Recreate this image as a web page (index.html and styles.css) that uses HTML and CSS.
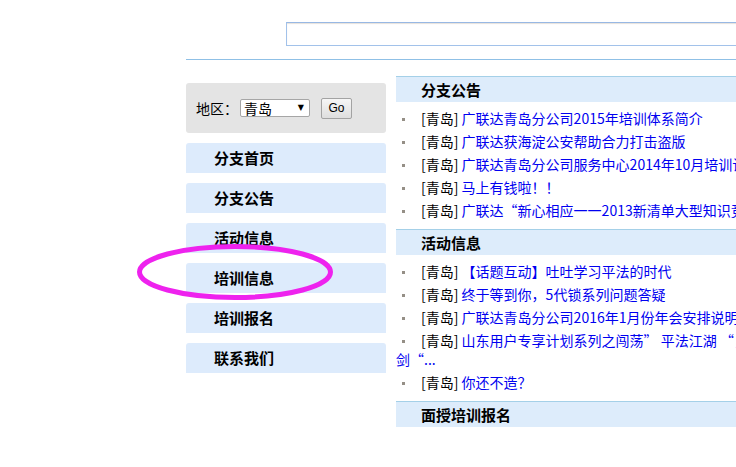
FILE: index.html
```html
<!DOCTYPE html>
<html lang="zh-CN">
<head>
<meta charset="utf-8">
<title>分支公告</title>
<link rel="stylesheet" href="styles.css">
</head>
<body>
<header class="top">
  <div class="search-row"><input class="search" type="text"></div>
  <div class="rule"></div>
</header>
<div class="main">
  <aside class="side">
    <div class="region">
      <span class="region-label">地区：</span>
      <span class="select"><span class="select-text">青岛</span><span class="select-arrow">▼</span></span>
      <button class="go" type="button">Go</button>
    </div>
    <nav class="nav">
      <a class="nav-item">分支首页</a>
      <a class="nav-item">分支公告</a>
      <a class="nav-item">活动信息</a>
      <a class="nav-item">培训信息</a>
      <a class="nav-item">培训报名</a>
      <a class="nav-item">联系我们</a>
    </nav>
  </aside>
  <section class="content">
    <div class="block">
      <h2 class="block-title">分支公告</h2>
      <ul class="list">
        <li><span class="dot"></span><span class="tag">[青岛]</span> <a class="link">广联达青岛分公司2015年培训体系简介</a></li>
        <li><span class="dot"></span><span class="tag">[青岛]</span> <a class="link">广联达获海淀公安帮助合力打击盗版</a></li>
        <li><span class="dot"></span><span class="tag">[青岛]</span> <a class="link">广联达青岛分公司服务中心2014年10月培训计</a></li>
        <li><span class="dot"></span><span class="tag">[青岛]</span> <a class="link">马上有钱啦！！</a></li>
        <li><span class="dot"></span><span class="tag">[青岛]</span> <a class="link">广联达“新心相应一一2013新清单大型知识竞</a></li>
      </ul>
    </div>
    <div class="block">
      <h2 class="block-title">活动信息</h2>
      <ul class="list">
        <li><span class="dot"></span><span class="tag">[青岛]</span> <a class="link">【话题互动】吐吐学习平法的时代</a></li>
        <li><span class="dot"></span><span class="tag">[青岛]</span> <a class="link">终于等到你，5代锁系列问题答疑</a></li>
        <li><span class="dot"></span><span class="tag">[青岛]</span> <a class="link">广联达青岛分公司2016年1月份年会安排说明</a></li>
        <li><span class="dot"></span><span class="tag">[青岛]</span> <a class="link">山东用户专享计划系列之闯荡” 平法江湖 “，剑“...</a></li>
        <li><span class="dot"></span><span class="tag">[青岛]</span> <a class="link">你还不造？</a></li>
      </ul>
    </div>
    <div class="block">
      <h2 class="block-title">面授培训报名</h2>
    </div>
  </section>
</div>
<svg class="annot" width="204" height="64" viewBox="0 0 204 64" aria-hidden="true">
  <ellipse cx="101" cy="31" rx="95.5" ry="25.5" fill="none" stroke="#ee22ee" stroke-width="5"/>
</svg>
</body>
</html>
```

FILE: styles.css
```css
html, body {
  margin: 0;
  padding: 0;
  overflow: hidden;
  background: #ffffff;
}
body {
  font-family: "Noto Sans CJK SC", "Liberation Sans", sans-serif;
  font-size: 14px;
  color: #000;
  position: relative;
  width: 736px;
  height: 467px;
}
.top {
  padding: 22px 0 0 186px;
}
.search-row {
  padding-left: 100px;
  height: 24px;
}
.search {
  display: block;
  box-sizing: border-box;
  width: 480px;
  height: 24px;
  margin: 0;
  border: 1px solid #a2c2ea;
  border-top-color: #98b8e4;
  box-shadow: inset 0 1px 1px #e6e2dc;
  background: #fff;
  outline: none;
}
.rule {
  margin-top: 13px;
  width: 600px;
  height: 1px;
  background: #8fc0e6;
}
.main {
  display: flex;
  gap: 10px;
  padding-left: 186px;
}
.side {
  flex: none;
  width: 200px;
  margin-top: 23px;
}
.region {
  height: 50px;
  box-sizing: border-box;
  background: #e4e4e4;
  border-radius: 3px;
  display: flex;
  align-items: center;
  padding-left: 10px;
}
.region-label {
  font-size: 14px;
  line-height: 18px;
  margin-right: 2px;
}
.select {
  box-sizing: border-box;
  width: 70px;
  height: 18px;
  border: 1px solid #a6a6a6;
  border-radius: 2px;
  background: #fff;
  display: flex;
  align-items: center;
  justify-content: space-between;
  padding: 0 5px 0 3px;
}
.select-text {
  font-size: 14px;
  line-height: 16px;
}
.select-arrow {
  font-size: 8px;
  line-height: 16px;
  font-family: "DejaVu Sans", sans-serif;
}
.go {
  box-sizing: border-box;
  width: 31px;
  height: 21px;
  margin-left: 11px;
  padding: 0;
  border: 1px solid #a3a3a3;
  border-radius: 2px;
  background: linear-gradient(#f6f6f6, #dedede);
  font-family: "Liberation Sans", sans-serif;
  font-size: 12px;
  color: #000;
}
.nav {
  display: flex;
  flex-direction: column;
  gap: 10px;
  margin-top: 10px;
}
.nav-item {
  display: block;
  height: 30px;
  line-height: 30px;
  padding-left: 28px;
  background: #ddebfc;
  border-radius: 3px 3px 0 0;
  font-size: 15px;
  font-weight: bold;
  color: #000;
}
.content {
  flex: none;
  width: 360px;
  margin-top: 16px;
}
.block-title {
  margin: 0;
  height: 25px;
  line-height: 25px;
  border-top: 1px solid #a4d0e8;
  background: #ddecfb;
  padding-left: 25px;
  font-size: 15px;
  font-weight: bold;
}
.list {
  list-style: none;
  margin: 0;
  padding: 5px 0 7px;
}
.list li {
  line-height: 19px;
  padding: 2px 0;
  font-size: 14px;
}
.dot {
  display: inline-block;
  width: 3px;
  height: 3px;
  background: #958f86;
  vertical-align: middle;
  margin: 0 16px 2px 6px;
}
.tag {
  color: #000;
}
.link {
  color: #0000f0;
}
.annot {
  position: absolute;
  left: 134px;
  top: 241px;
}
```
